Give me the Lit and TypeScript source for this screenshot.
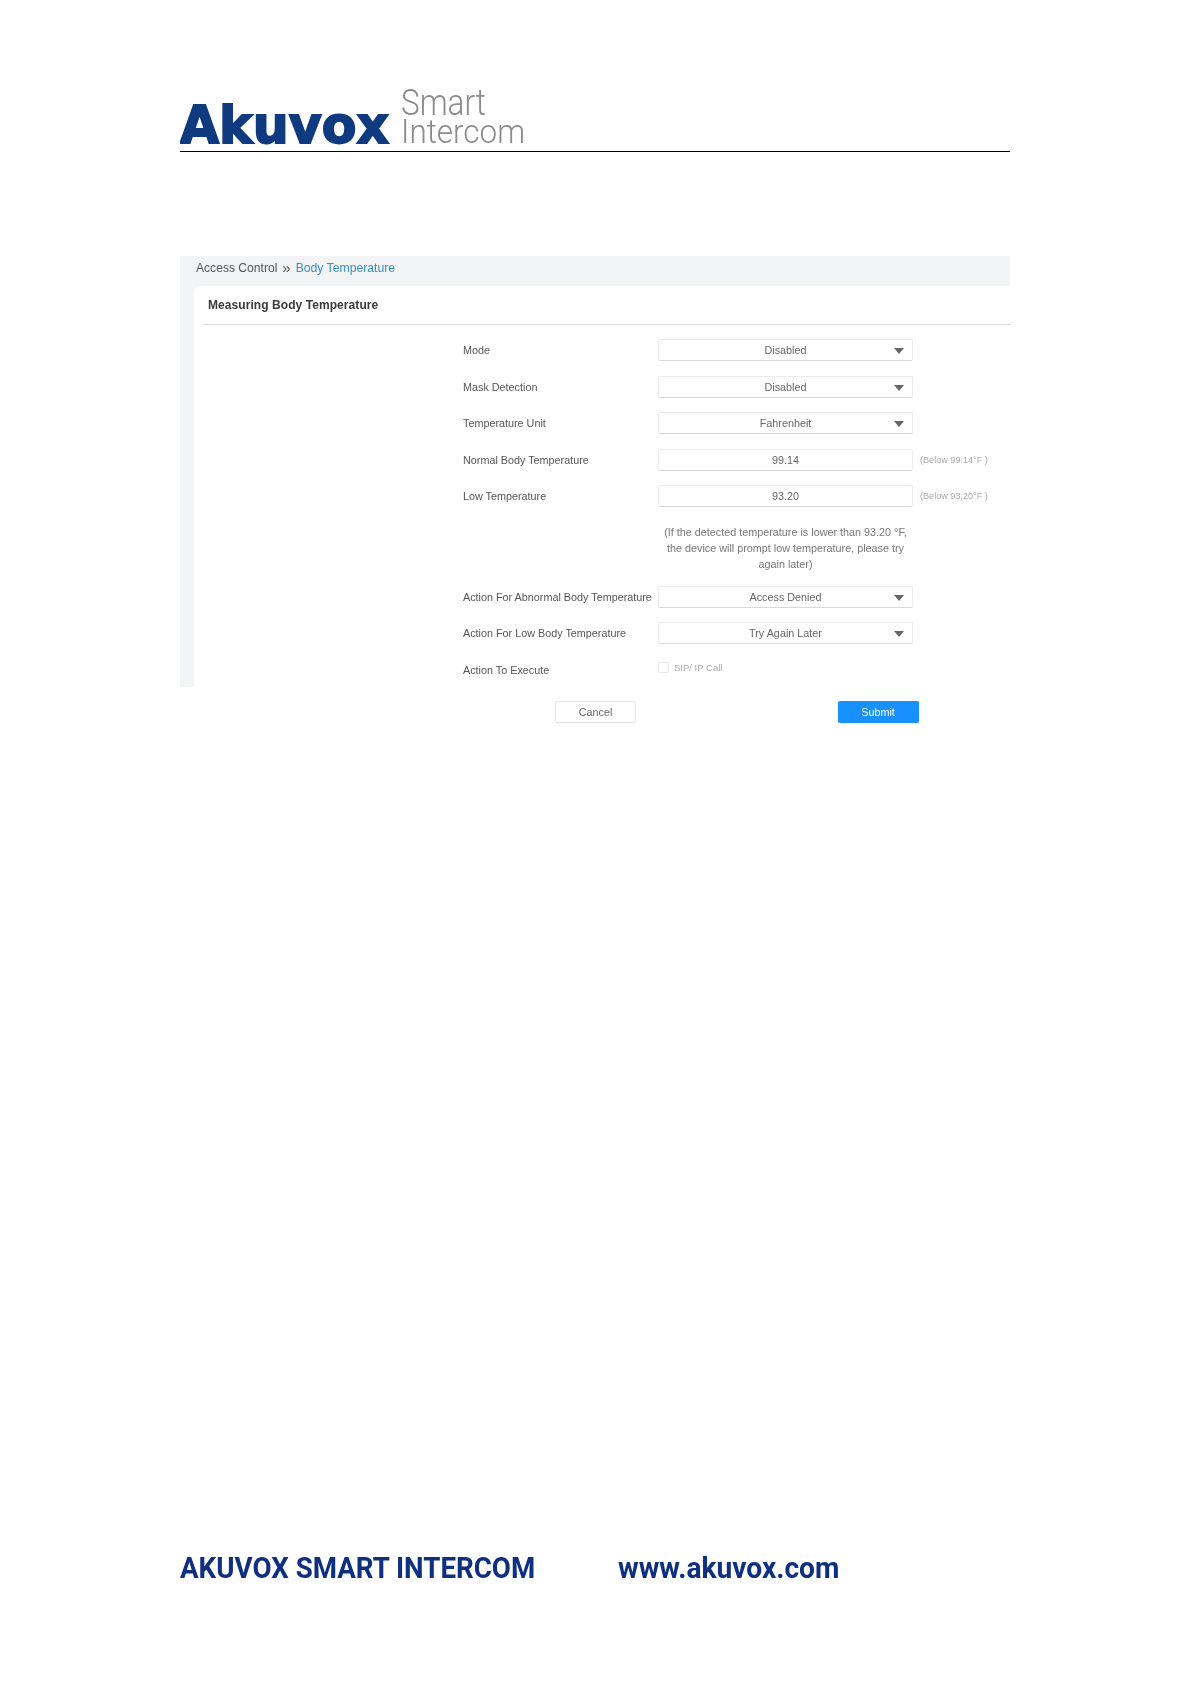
import { LitElement, html, css } from "lit";
import { customElement } from "lit/decorators.js";

const arrow = html`<svg class="arrow" viewBox="0 0 10 6"><path d="M0 0H10L5 6Z" fill="#666"/></svg>`;

@customElement("app-root")
export class AppRoot extends LitElement {
  static styles = css`
    :host { display: block; width: 1191px; height: 1684px; background: #fff; font-family: "Liberation Sans", Arial, sans-serif; color: #555; overflow: hidden; }
    .page { display: flex; flex-direction: column; height: 1684px; padding: 0 181px 0 180px; box-sizing: border-box; }
    .logo { display: block; margin: 70px 0 -14px; width: 370px; height: 95px; flex: none; filter: blur(.3px); }
    .rule { height: 1px; background: #000; flex: none; position: relative; }
    .panel { margin-top: 104px; height: 431px; background: #f2f4f6; padding-left: 14px; display: flex; flex-direction: column; flex: none; filter: blur(.3px); }
    .crumb { height: 30px; padding-bottom: 6px; box-sizing: border-box; display: flex; align-items: center; margin-left: 2px; font-size: 12.1px; color: #555; gap: 5px; flex: none; }
    .crumb .sep { font-size: 15px; line-height: 12px; }
    .crumb .link { color: #3a8fc8; font-size: 12.2px; }
    .card { flex: 1; background: #fff; border-radius: 6px 0 0 0; padding: 0 0 0 10px; }
    .title { height: 38px; display: flex; align-items: center; padding-left: 4px; font-size: 12px; letter-spacing: .07px; font-weight: 700; color: #3a3a3a; border-bottom: 1px solid #d9d9d9; }
    .form { margin-top: 7px; margin-left: 259px; display: flex; flex-direction: column; }
    .row { display: flex; align-items: center; height: 36.5px; font-size: 10.8px; }
    .label { width: 195px; flex: none; color: #555; white-space: nowrap; }
    .ctl { width: 255px; height: 22px; flex: none; box-sizing: border-box; position: relative; display: flex; align-items: center; justify-content: center; background: #fff; border: 1px solid #ececec; border-bottom-color: #d9d9d9; border-radius: 2px; color: #666; font-size: 10.8px; }
    .arrow { position: absolute; right: 8px; top: 8px; width: 10px; height: 6px; }
    .hint { margin-left: 7px; font-size: 9.1px; color: #aaa; white-space: nowrap; }
    .note { margin-left: 195px; width: 255px; text-align: center; font-size: 10.8px; line-height: 16px; color: #777; padding: 9.5px 0 6.5px; }
    .check { display: flex; align-items: center; gap: 5px; font-size: 9.5px; color: #aaa; margin-top: -4px; }
    .box { width: 11px; height: 11px; box-sizing: border-box; border: 1px solid #e8e8e8; border-radius: 2px; background: #fff; }
    .btns { display: flex; margin: 14px 0 0 375px; gap: 201.5px; flex: none; filter: blur(.3px); }
    .btn { width: 81px; height: 22px; box-sizing: border-box; border-radius: 2px; display: flex; align-items: center; justify-content: center; font-size: 10.8px; }
    .cancel { background: #fff; border: 1px solid #e6e6e6; color: #666; box-shadow: 0 1px 2px rgba(0,0,0,.05); }
    .submit { background: #1890ff; color: #fff; }
    .footer { margin-top: auto; margin-bottom: 99.5px; display: flex; align-items: baseline; color: #0f2f7f; font-family: Roboto, sans-serif; font-weight: 700; font-size: 30px; white-space: nowrap; }
    .f1 { width: 438px; display: block; }
    .f1 span, .f2 span { display: inline-block; transform-origin: left center; }
    .f1 span { transform: scaleX(.923); }
    .f2 span { transform: scaleX(.938); }
  `;

  private select(label: string, value: string) {
    return html`<div class="row"><div class="label">${label}</div><div class="ctl">${value}${arrow}</div></div>`;
  }
  private input(label: string, value: string, hint: string) {
    return html`<div class="row"><div class="label">${label}</div><div class="ctl">${value}</div><div class="hint">${hint}</div></div>`;
  }

  render() {
    return html`<div class="page">
      <svg class="logo" viewBox="0 0 370 95" role="img" aria-label="Akuvox Smart Intercom">
        <text x="0" y="73" font-family="DejaVu Sans" font-weight="700" font-size="51" fill="#0f3a80" stroke="#0f3a80" stroke-width="1.8" textLength="209" lengthAdjust="spacingAndGlyphs">Akuvox</text>
        <text x="221" y="44.5" font-family="Roboto" font-weight="300" font-size="37" fill="#8c8c8c" textLength="85" lengthAdjust="spacingAndGlyphs">Smart</text>
        <text x="221" y="73" font-family="Roboto" font-weight="300" font-size="33" fill="#8c8c8c" textLength="124" lengthAdjust="spacingAndGlyphs">Intercom</text>
      </svg>
      <div class="rule"></div>
      <div class="panel">
        <div class="crumb"><span>Access Control</span><span class="sep">»</span><span class="link">Body Temperature</span></div>
        <div class="card">
          <div class="title">Measuring Body Temperature</div>
          <div class="form">
            ${this.select("Mode", "Disabled")}
            ${this.select("Mask Detection", "Disabled")}
            ${this.select("Temperature Unit", "Fahrenheit")}
            ${this.input("Normal Body Temperature", "99.14", "(Below 99.14°F )")}
            ${this.input("Low Temperature", "93.20", "(Below 93.20°F )")}
            <div class="note">(If the detected temperature is lower than 93.20 °F, the device will prompt low temperature, please try again later)</div>
            ${this.select("Action For Abnormal Body Temperature", "Access Denied")}
            ${this.select("Action For Low Body Temperature", "Try Again Later")}
            <div class="row"><div class="label">Action To Execute</div><div class="check"><div class="box"></div>SIP/ IP Call</div></div>
          </div>
        </div>
      </div>
      <div class="btns"><div class="btn cancel">Cancel</div><div class="btn submit">Submit</div></div>
      <div class="footer"><div class="f1"><span>AKUVOX SMART INTERCOM</span></div><div class="f2"><span>www.akuvox.com</span></div></div>
    </div>`;
  }
}
